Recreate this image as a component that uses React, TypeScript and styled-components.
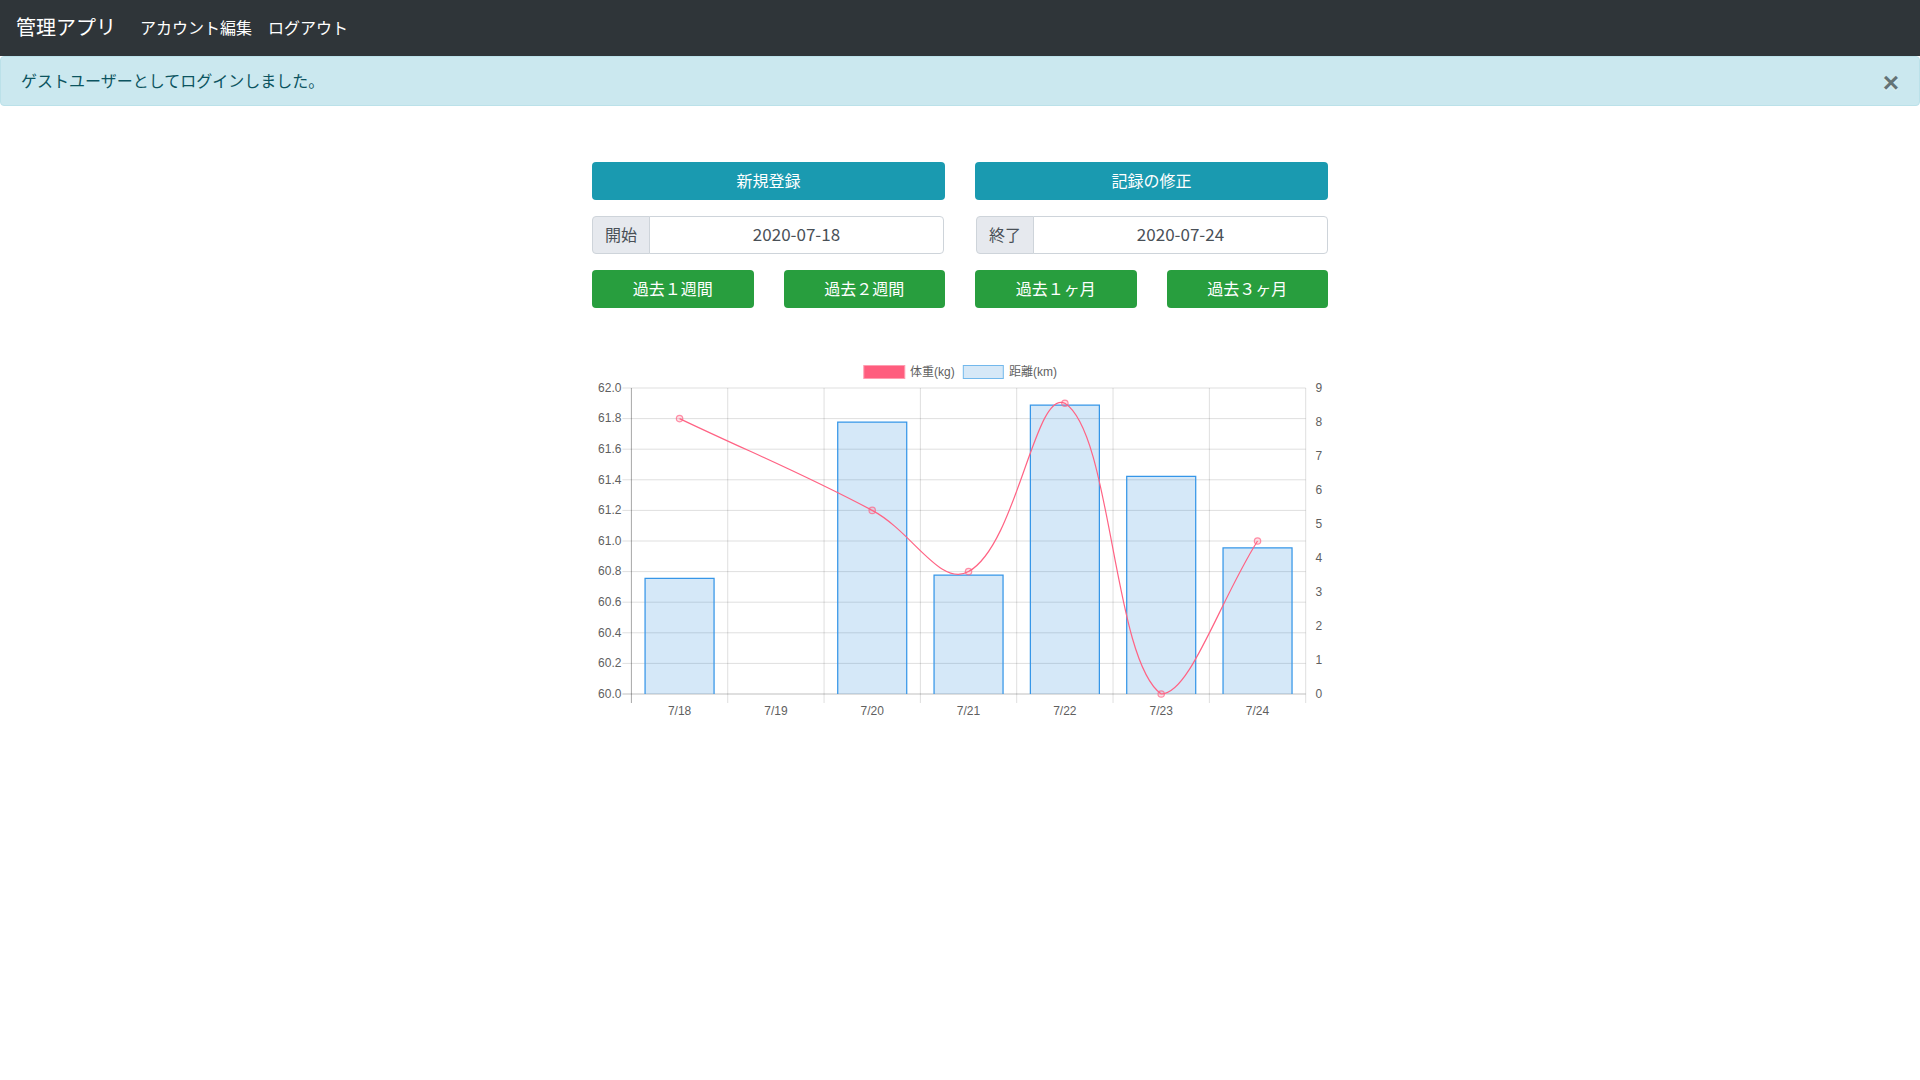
import React from "react";
import styled, { createGlobalStyle } from "styled-components";

const GlobalStyle = createGlobalStyle`
  html, body {
    margin: 0;
    background: #fff;
  }
  body {
    font-family: "Noto Sans CJK JP", "Noto Sans", sans-serif;
    font-size: 16px;
    line-height: 1.5;
    color: #212529;
  }
  * {
    box-sizing: border-box;
  }
`;

const Navbar = styled.nav`
  display: flex;
  align-items: center;
  height: 56px;
  padding: 0 16px 2px;
  background: #2f3539;
`;

const Brand = styled.a`
  margin-right: 16px;
  font-size: 20px;
  color: #fff;
`;

const NavLink = styled.a`
  padding: 0 8px;
  color: #fff;
`;

const Alert = styled.div`
  position: relative;
  height: 50px;
  padding: 11px 64px 12px 20px;
  background: #cbe8ef;
  border: 1px solid #bbe1e9;
  border-radius: 4px;
  color: #0c5460;
`;

const CloseButton = styled.button`
  position: absolute;
  top: 0;
  right: 0;
  padding: 12px 20px;
  border: 0;
  background: transparent;
  font-family: "Liberation Sans", sans-serif;
  font-size: 28px;
  font-weight: 700;
  line-height: 1;
  color: #000;
  opacity: 0.5;
  text-shadow: 0 1px 0 #fff;
`;

const Main = styled.main`
  width: 736px;
  margin: 0 auto;
  padding-top: 56px;
`;

const ButtonRow = styled.div`
  display: grid;
  grid-template-columns: 1fr 1fr;
  gap: 30px;
`;

const RangeRow = styled.div`
  display: grid;
  grid-template-columns: repeat(4, 1fr);
  gap: 30px;
`;

const ActionButton = styled.button<{ $tone: "info" | "success" }>`
  height: 38px;
  padding: 0 0 2px;
  border: 0;
  border-radius: 4px;
  background: ${(p) => (p.$tone === "info" ? "#1a9ab0" : "#289e3e")};
  font: inherit;
  color: #fff;
`;

const DateRow = styled.div`
  display: flex;
  justify-content: space-between;
  margin: 16px 0;
`;

const InputGroup = styled.div`
  display: flex;
  width: 352px;
  height: 38px;
`;

const GroupLabel = styled.span`
  width: 58px;
  display: flex;
  align-items: center;
  justify-content: center;
  padding-bottom: 3px;
  background: #e6e9ee;
  border: 1px solid #ced4da;
  border-radius: 4px 0 0 4px;
  color: #495057;
`;

const DateInput = styled.input`
  flex: 1;
  min-width: 0;
  margin-left: -1px;
  padding: 0 0 2px;
  border: 1px solid #ced4da;
  border-radius: 0 4px 4px 0;
  font: inherit;
  font-size: 17px;
  text-align: center;
  color: #495057;
  outline: none;
`;

const ChartWrap = styled.div`
  margin-top: 48px;
`;

const ChartSvg = styled.svg`
  display: block;
`;

const ChartText = styled.text`
  font-family: "Liberation Sans", "Noto Sans CJK JP", sans-serif;
  font-size: 12px;
  fill: #5f5f5f;
`;

const labels = ["7/18", "7/19", "7/20", "7/21", "7/22", "7/23", "7/24"];
const weights: (number | null)[] = [61.8, null, 61.2, 60.8, 61.9, 60.0, 61.0];
const distances = [3.4, 0, 8.0, 3.5, 8.5, 6.4, 4.3];

const plot = { left: 39.4, right: 713.7, top: 32, bottom: 338, tickEnd: 347 };
const step = (plot.right - plot.left) / 7;
const weightY = (v: number) => plot.bottom - ((v - 60) / 2) * (plot.bottom - plot.top);
const distanceY = (v: number) => plot.bottom - (v / 9) * (plot.bottom - plot.top);
const bandX = (i: number) => plot.left + step * (i + 0.5);
const clampY = (y: number) => Math.min(plot.bottom, Math.max(plot.top, y));

type Pt = { x: number; y: number };

// same spline as chart.js (tension .4, control points capped to the plot area)
const splinePath = (pts: Pt[], tension = 0.4) => {
  const ctrl = pts.map((cur, i) => {
    const prev = pts[i - 1] ?? cur;
    const next = pts[i + 1] ?? cur;
    const d01 = Math.hypot(cur.x - prev.x, cur.y - prev.y);
    const d12 = Math.hypot(next.x - cur.x, next.y - cur.y);
    const total = d01 + d12 || 1;
    const dx = next.x - prev.x;
    const dy = next.y - prev.y;
    return {
      inX: cur.x - (tension * d01 * dx) / total,
      inY: clampY(cur.y - (tension * d01 * dy) / total),
      outX: cur.x + (tension * d12 * dx) / total,
      outY: clampY(cur.y + (tension * d12 * dy) / total),
    };
  });
  let d = `M${pts[0].x} ${pts[0].y}`;
  for (let i = 1; i < pts.length; i++) {
    d += ` C${ctrl[i - 1].outX} ${ctrl[i - 1].outY} ${ctrl[i].inX} ${ctrl[i].inY} ${pts[i].x} ${pts[i].y}`;
  }
  return d;
};

const WeightChart = () => {
  const points: Pt[] = [];
  weights.forEach((v, i) => {
    if (v !== null) points.push({ x: bandX(i), y: weightY(v) });
  });
  const barWidth = 69;

  return (
    <ChartSvg width={736} height={370} viewBox="0 0 736 370">
      {/* legend */}
      <rect x={271.8} y={9.5} width={41} height={13} fill="#ff5d7e" stroke="#ff9db1" />
      <ChartText x={318} y={19.5}>体重(kg)</ChartText>
      <rect x={371.3} y={9.5} width={40} height={13} fill="#d6e8f7" stroke="#72b8ec" />
      <ChartText x={417} y={19.5}>距離(km)</ChartText>

      {/* grid */}
      {Array.from({ length: 11 }, (_, i) => {
        const y = plot.top + ((plot.bottom - plot.top) / 10) * i;
        return (
          <g key={i}>
            <line
              x1={plot.left - 9}
              x2={plot.right}
              y1={y}
              y2={y}
              stroke={i === 10 ? "rgba(0,0,0,0.25)" : "rgba(0,0,0,0.13)"}
            />
            <ChartText x={plot.left - 10} y={y + 3.7} textAnchor="end">
              {(62 - i * 0.2).toFixed(1)}
            </ChartText>
          </g>
        );
      })}
      {Array.from({ length: 8 }, (_, i) => (
        <line
          key={i}
          x1={plot.left + step * i}
          x2={plot.left + step * i}
          y1={plot.top}
          y2={plot.tickEnd}
          stroke={i === 0 ? "rgba(0,0,0,0.35)" : "rgba(0,0,0,0.13)"}
        />
      ))}
      {Array.from({ length: 10 }, (_, i) => (
        <ChartText key={i} x={723.5} y={distanceY(i) + 3.7}>
          {i}
        </ChartText>
      ))}
      {labels.map((label, i) => (
        <ChartText key={label} x={bandX(i)} y={359} textAnchor="middle">
          {label}
        </ChartText>
      ))}

      {/* bars */}
      {distances.map((v, i) => {
        if (!v) return null;
        const x = bandX(i) - barWidth / 2;
        const y = distanceY(v);
        return (
          <g key={i}>
            <rect x={x} y={y} width={barWidth} height={plot.bottom - y} fill="rgba(45,140,220,0.2)" />
            <path
              d={`M${x} ${plot.bottom} V${y} H${x + barWidth} V${plot.bottom}`}
              fill="none"
              stroke="rgb(54,150,232)"
              strokeWidth={1.25}
            />
          </g>
        );
      })}

      {/* weight line */}
      <path d={splinePath(points)} fill="none" stroke="rgb(255,99,132)" strokeWidth={1.2} />
      {points.map((p) => (
        <circle
          key={p.x}
          cx={p.x}
          cy={p.y}
          r={3.2}
          fill="rgba(255,99,132,0.2)"
          stroke="rgba(255,99,132,0.7)"
          strokeWidth={1.2}
        />
      ))}
    </ChartSvg>
  );
};

const App = () => {
  return (
    <>
      <GlobalStyle />
      <Navbar>
        <Brand>管理アプリ</Brand>
        <NavLink>アカウント編集</NavLink>
        <NavLink>ログアウト</NavLink>
      </Navbar>
      <Alert>
        ゲストユーザーとしてログインしました。
        <CloseButton type="button">×</CloseButton>
      </Alert>
      <Main>
        <ButtonRow>
          <ActionButton $tone="info">新規登録</ActionButton>
          <ActionButton $tone="info">記録の修正</ActionButton>
        </ButtonRow>
        <DateRow>
          <InputGroup>
            <GroupLabel>開始</GroupLabel>
            <DateInput readOnly value="2020-07-18" />
          </InputGroup>
          <InputGroup>
            <GroupLabel>終了</GroupLabel>
            <DateInput readOnly value="2020-07-24" />
          </InputGroup>
        </DateRow>
        <RangeRow>
          <ActionButton $tone="success">過去１週間</ActionButton>
          <ActionButton $tone="success">過去２週間</ActionButton>
          <ActionButton $tone="success">過去１ヶ月</ActionButton>
          <ActionButton $tone="success">過去３ヶ月</ActionButton>
        </RangeRow>
        <ChartWrap>
          <WeightChart />
        </ChartWrap>
      </Main>
    </>
  );
};

export default App;
